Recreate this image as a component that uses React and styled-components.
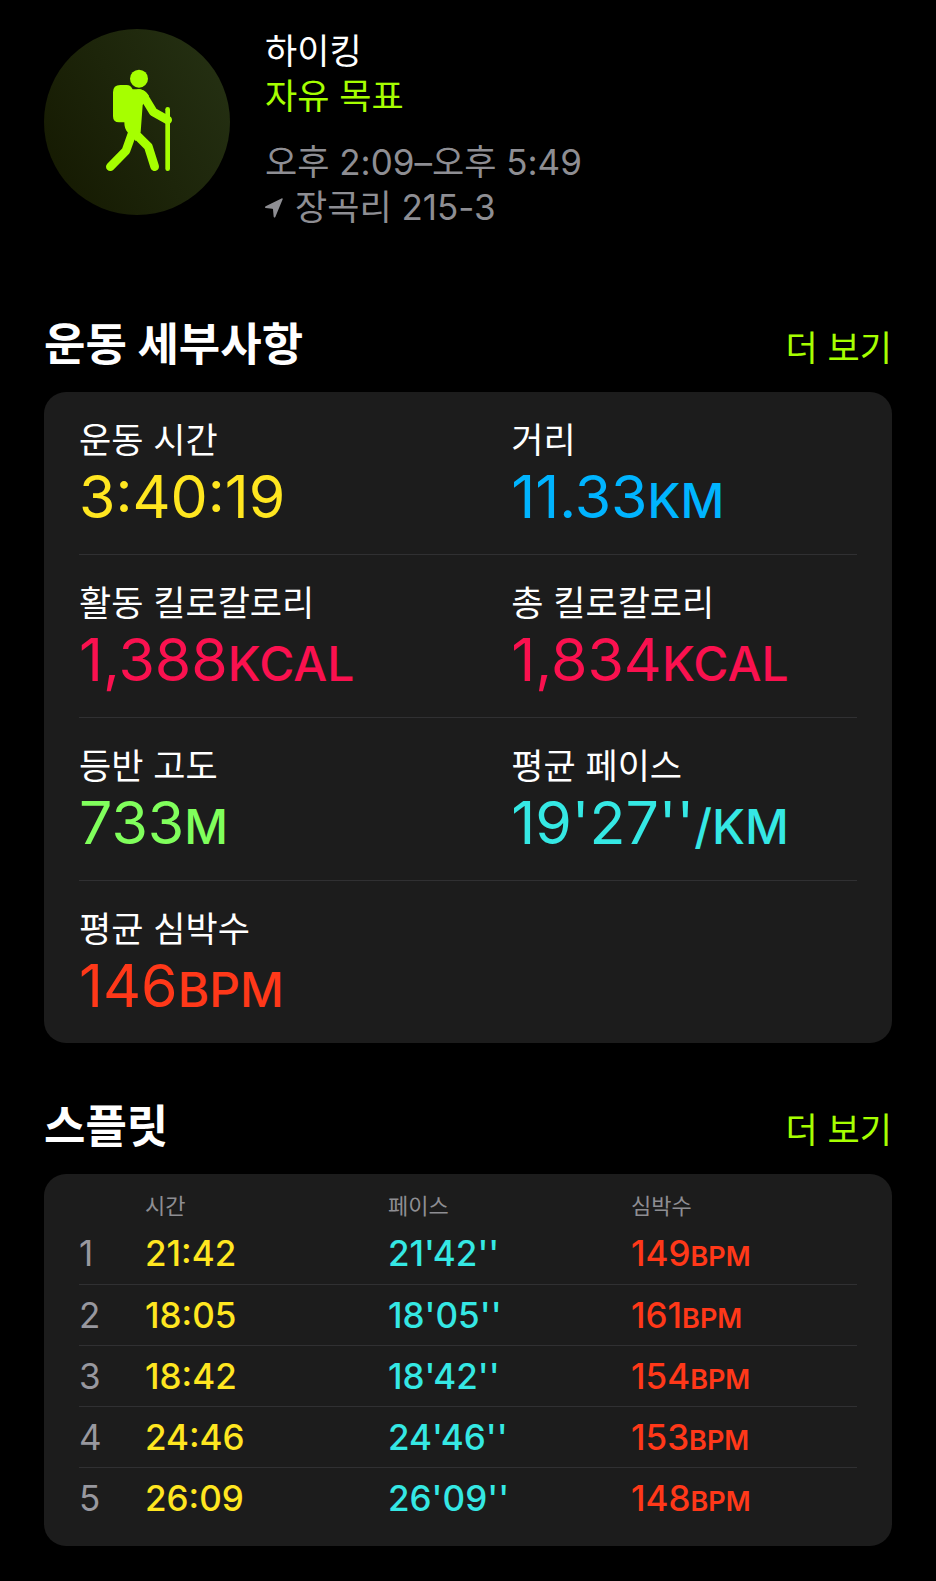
import React from "react";
import styled, { createGlobalStyle } from "styled-components";

const GlobalStyle = createGlobalStyle`
  * {
    box-sizing: border-box;
  }

  body {
    margin: 0;
    background-color: #000;
    color: #fff;
    font-family: "Inter", "Noto Sans CJK KR", sans-serif;
  }
`;

const Page = styled.main`
  padding: 29px 44px 35px;
`;

const Header = styled.header`
  display: flex;
  gap: 35px;
  margin-bottom: 85px;
`;

const WorkoutBadge = styled.div`
  flex: none;
  width: 186px;
  height: 186px;
  border-radius: 50%;
  background: linear-gradient(60deg, #141800, #263214);
`;

const HeaderText = styled.div`
  font-size: 35px;
  line-height: 45px;
`;

const WorkoutName = styled.h1`
  margin: 0;
  font-size: 35px;
  font-weight: 400;
`;

const Goal = styled.p`
  margin: 0 0 21px;
  color: #a6ff00;
`;

const Meta = styled.p`
  display: flex;
  align-items: center;
  gap: 12px;
  margin: 0;
  color: #8e8e93;
`;

const SectionHeader = styled.div`
  display: flex;
  justify-content: space-between;
  align-items: baseline;
  margin-bottom: 14px;
`;

const SectionTitle = styled.h2`
  margin: 0;
  font-size: 45px;
  font-weight: 700;
  line-height: 60px;
`;

const MoreLink = styled.a`
  font-size: 35px;
  line-height: 60px;
  color: #a6ff00;
  text-decoration: none;
`;

const Card = styled.section`
  padding: 0 35px;
  border-radius: 22px;
  background-color: #1c1c1c;
`;

const DetailsCard = styled(Card)`
  margin-bottom: 54px;
`;

const SplitsCard = styled(Card)`
  padding-top: 16px;
  padding-bottom: 18px;
`;

const MetricRow = styled.dl`
  display: grid;
  grid-template-columns: 5fr 4fr;
  margin: 0;
  padding: 26px 0 23px;

  & + & {
    border-top: 1px solid #303032;
  }
`;

const MetricLabel = styled.dt`
  font-size: 35px;
  line-height: 45px;
`;

const MetricValue = styled.dd`
  margin: 0;
  font-size: 59px;
  line-height: 68px;
  white-space: nowrap;
  color: ${({ $color }) => $color};
`;

const MetricUnit = styled.span`
  font-size: 48px;
  font-weight: 500;
  line-height: 1;
`;

const SplitTable = styled.table`
  width: 100%;
  table-layout: fixed;
  border-collapse: collapse;
  text-align: left;
`;

const IndexCol = styled.col`
  width: 66px;
`;

const SplitCol = styled.col`
  width: 243px;
`;

const HeadCell = styled.th`
  padding: 0;
  height: 33px;
  font-size: 22px;
  font-weight: 400;
  line-height: 33px;
  color: #8e8e93;
`;

const SplitRow = styled.tr`
  & + & {
    border-top: 1px solid #303032;
  }
`;

const IndexCell = styled.th`
  padding: 0;
  height: 61px;
  font-size: 35px;
  font-weight: 400;
  line-height: 60px;
  color: #98989f;
`;

const SplitCell = styled.td`
  padding: 0;
  font-size: 35px;
  font-weight: 500;
  line-height: 60px;
  color: ${({ $color }) => $color};
`;

const SplitUnit = styled.span`
  font-size: 27px;
  font-weight: 600;
  line-height: 1;
`;

const colors = {
  time: "#ffe620",
  distance: "#00b4ff",
  energy: "#fa114f",
  climb: "#80ff5c",
  pace: "#35e8e4",
  heart: "#ff3819",
};

const metricRows = [
  [
    { label: "운동 시간", value: "3:40:19", color: colors.time },
    { label: "거리", value: "11.33", unit: "KM", color: colors.distance },
  ],
  [
    { label: "활동 킬로칼로리", value: "1,388", unit: "KCAL", color: colors.energy },
    { label: "총 킬로칼로리", value: "1,834", unit: "KCAL", color: colors.energy },
  ],
  [
    { label: "등반 고도", value: "733", unit: "M", color: colors.climb },
    { label: "평균 페이스", value: "19'27''", unit: "/KM", color: colors.pace },
  ],
  [{ label: "평균 심박수", value: "146", unit: "BPM", color: colors.heart }],
];

const splits = [
  { time: "21:42", pace: "21'42''", heart: 149 },
  { time: "18:05", pace: "18'05''", heart: 161 },
  { time: "18:42", pace: "18'42''", heart: 154 },
  { time: "24:46", pace: "24'46''", heart: 153 },
  { time: "26:09", pace: "26'09''", heart: 148 },
];

const HikerIcon = () => (
  <svg width="186" height="186" viewBox="42 27 558 558" aria-hidden="true">
    <g fill="#a6ff00">
      <circle cx="327" cy="176" r="27" />
      <path d="M271 195H290Q302 195 308 208H325C340 208 350 216 357 228L338 255L332 336L318 364L294 338C286 330 283 320 283 307H267Q249 307 249 289V217Q249 195 271 195Z" />
    </g>
    <g
      fill="none"
      stroke="#a6ff00"
      strokeWidth="26"
      strokeLinecap="round"
      strokeLinejoin="round"
    >
      <path d="M326 221Q336 222 343 232L370 276L413 300" />
      <path d="M308 336L288 392L241 440" />
      <path d="M314 339L355 380L374 440" />
      <path d="M413 268V446" strokeWidth="14" />
    </g>
  </svg>
);

const LocationIcon = () => (
  <svg width="18" height="20" viewBox="0 0 54 60" aria-hidden="true">
    <path
      d="M51 1Q54 1 53 4L31 57Q28 61 26 56L24 34Q24 32 22 32L2 30Q-2 28 2 25Z"
      fill="#8e8e93"
    />
  </svg>
);

const App = () => {
  return (
    <>
      <GlobalStyle />
      <Page>
        <Header>
          <WorkoutBadge>
            <HikerIcon />
          </WorkoutBadge>
          <HeaderText>
            <WorkoutName>하이킹</WorkoutName>
            <Goal>자유 목표</Goal>
            <Meta>오후 2:09–오후 5:49</Meta>
            <Meta>
              <LocationIcon />
              장곡리 215-3
            </Meta>
          </HeaderText>
        </Header>

        {/* Workout details */}
        <SectionHeader>
          <SectionTitle>운동 세부사항</SectionTitle>
          <MoreLink href="#details">더 보기</MoreLink>
        </SectionHeader>
        <DetailsCard id="details">
          {metricRows.map((row, index) => (
            <MetricRow key={index}>
              {row.map(({ label, value, unit, color }) => (
                <div key={label}>
                  <MetricLabel>{label}</MetricLabel>
                  <MetricValue $color={color}>
                    {value}
                    {unit && <MetricUnit>{unit}</MetricUnit>}
                  </MetricValue>
                </div>
              ))}
            </MetricRow>
          ))}
        </DetailsCard>

        {/* Splits */}
        <SectionHeader>
          <SectionTitle>스플릿</SectionTitle>
          <MoreLink href="#splits">더 보기</MoreLink>
        </SectionHeader>
        <SplitsCard id="splits">
          <SplitTable>
            <colgroup>
              <IndexCol />
              <SplitCol />
              <SplitCol />
              <col />
            </colgroup>
            <thead>
              <tr>
                <HeadCell as="td" />
                <HeadCell scope="col">시간</HeadCell>
                <HeadCell scope="col">페이스</HeadCell>
                <HeadCell scope="col">심박수</HeadCell>
              </tr>
            </thead>
            <tbody>
              {splits.map(({ time, pace, heart }, index) => (
                <SplitRow key={index}>
                  <IndexCell scope="row">{index + 1}</IndexCell>
                  <SplitCell $color={colors.time}>{time}</SplitCell>
                  <SplitCell $color={colors.pace}>{pace}</SplitCell>
                  <SplitCell $color={colors.heart}>
                    {heart}
                    <SplitUnit>BPM</SplitUnit>
                  </SplitCell>
                </SplitRow>
              ))}
            </tbody>
          </SplitTable>
        </SplitsCard>
      </Page>
    </>
  );
};

export default App;
